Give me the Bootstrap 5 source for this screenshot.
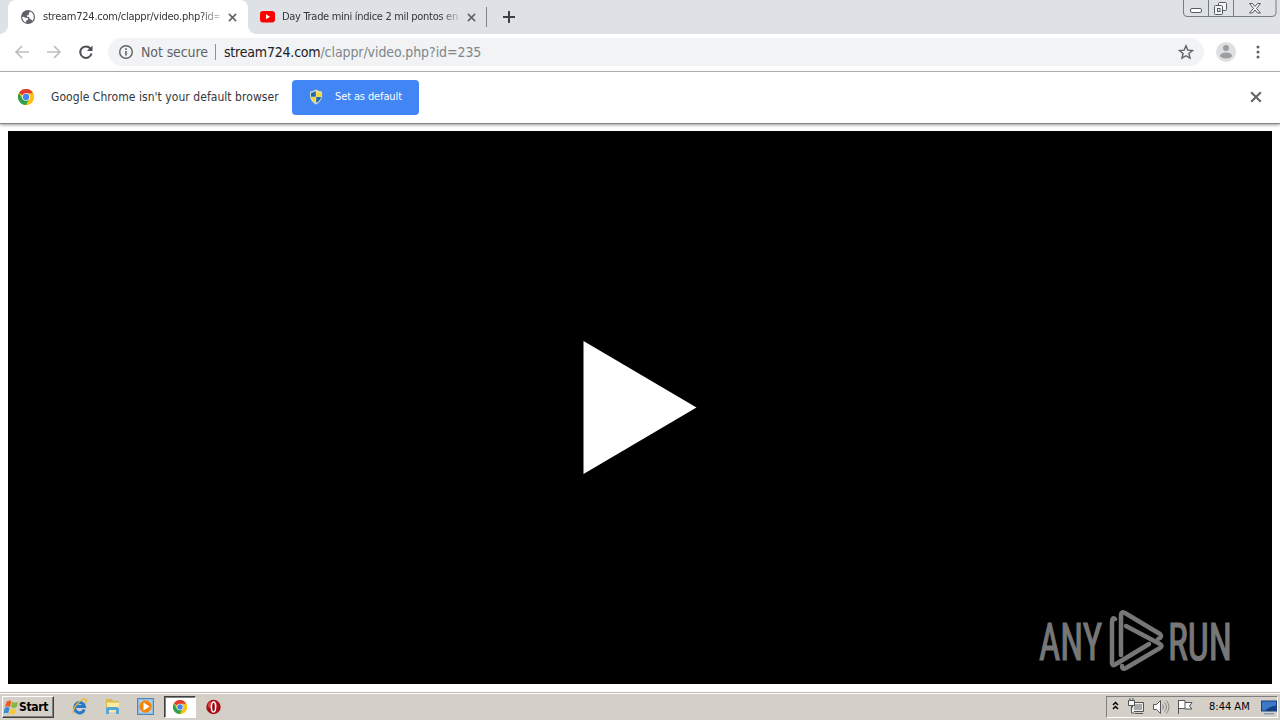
<!DOCTYPE html>
<html lang="en">
  <head>
    <meta charset="UTF-8" />
    <meta name="viewport" content="width=device-width, initial-scale=1.0" />
    <link
      rel="stylesheet"
      href="https://cdn.jsdelivr.net/npm/bootstrap@5.3.3/dist/css/bootstrap.min.css"
    />
    <title>stream724.com/clappr/video.php?id=235</title>
    <style>
      body {
        font-family: "DejaVu Sans Condensed", "DejaVu Sans", sans-serif;
        font-stretch: condensed;
        font-size: 11px;
        line-height: 16px;
        color: #333639;
        height: 720px;
      }
      svg { display: block; flex: none; }
      .tab-strip { height: 34px; background: #dee1e6; padding-left: 8px; }
      .browser-tab { height: 34px; width: 239px; padding-left: 12px; }
      .browser-tab.current { width: 240px; background: #fff; border-radius: 8px 8px 0 0; }
      .browser-tab.current::before,
      .browser-tab.current::after {
        content: "";
        position: absolute;
        bottom: 0;
        width: 8px;
        height: 8px;
      }
      .browser-tab.current::before { left: -8px; background: radial-gradient(circle at 0 0, #dee1e6 7.5px, #fff 8px); }
      .browser-tab.current::after { right: -8px; background: radial-gradient(circle at 100% 0, #dee1e6 7.5px, #fff 8px); }
      .tab-title {
        width: 177px;
        margin-left: 7px;
        -webkit-mask-image: linear-gradient(to right, #000 158px, rgba(0, 0, 0, 0.2) 177px);
      }
      .title-one { letter-spacing: -0.24px; }
      .title-two { letter-spacing: -0.3px; }
      .tab-line { width: 1px; height: 20px; background: #80858b; margin-top: 7px; margin-left: -1px; }
      .window-buttons { right: 3px; top: 0; }
      .toolbar { height: 38px; border-bottom: 1px solid #aeb1ae; padding: 0 14px 1px; }
      .address { height: 28px; width: 1096px; background: #f1f3f4; border-radius: 14px; margin-left: 14px; padding: 0 10px; font-size: 14px; }
      .address .security { color: #5f6368; width: 67px; margin-left: 7px; letter-spacing: -0.1px; }
      .address .split { width: 1px; height: 16px; background: #8d9196; margin: 0 8px 0 7px; }
      .address .site { color: #202124; letter-spacing: -0.2px; }
      .address .path { color: #80868b; letter-spacing: -0.08px; }
      .avatar { margin-left: 12px; }
      .infobar { height: 52px; border-bottom: 1px solid #858585; box-shadow: 0 1px 3px #999; padding: 0 18px 1px; }
      .info-text { font-size: 12px; margin-left: 17px; width: 241px; letter-spacing: 0.05px; }
      .default-btn { width: 127px; height: 35px; background: #4285f4; color: #fff; border-radius: 4px; font-size: 11px; line-height: 16px; padding: 0 16px; }
      .set-label { margin-left: 11px; letter-spacing: -0.12px; }
      .player { height: 553px; margin: 7px 8px 8px; background: #000; }
      .play-icon { position: absolute; left: 575px; top: 210px; }
      .watermark { position: absolute; left: 1028px; top: 475px; font-family: Roboto, sans-serif; }
      .taskbar { height: 28px; background: #d4d0c8; border-top: 1px solid #bdb9b0; box-shadow: inset 0 1px #fff; padding: 3px 2px 0; color: #000; }
      .start-btn { width: 52px; height: 22px; border: 1px solid; border-color: #fff #404040 #404040 #fff; box-shadow: inset -1px -1px #808080; }
      .start-label { font-weight: bold; font-size: 12px; letter-spacing: -0.35px; }
      .launchers { height: 22px; padding-left: 17px; padding-bottom: 1px; }
      .running { width: 32px; height: 22px; background: #fff; border: 1px solid; border-color: #404040 #fff #fff #404040; box-shadow: inset 1px 1px #808080; margin: 1px 10px 0; }
      .tray { width: 172px; height: 22px; border: 1px solid; border-color: #808080 #fff #fff #808080; padding-left: 5px; }
      .clock { width: 42px; margin-left: 15px; letter-spacing: 0; }
    </style>
  </head>

  <body class="d-flex flex-column overflow-hidden bg-white">
    <svg width="0" height="0" class="position-absolute">
      <defs>
        <symbol id="chrome" viewBox="0 0 48 48">
          <circle cx="24" cy="24" r="24" fill="#fbc116" />
          <path d="M24 24L3.200 12A24 24 0 0 1 44.800 12z" fill="#e33b2e" />
          <path d="M3.200 12A24 24 0 0 0 24 48L34.400 30 24 24 13.600 30z" fill="#2ba24c" />
          <path d="M24 13H45.300A24 24 0 0 1 24 48L34 30z" fill="#fbc116" />
          <circle cx="24" cy="24" r="11.500" fill="#fff" />
          <circle cx="24" cy="24" r="9.500" fill="#4285f4" />
        </symbol>
        <symbol id="cross" viewBox="0 0 10 10">
          <path d="M1 1l8 8M9 1L1 9" stroke="#5f6368" stroke-width="1.700" />
        </symbol>
      </defs>
    </svg>

    <header class="tab-strip d-flex position-relative flex-shrink-0">
      <div class="browser-tab current d-flex align-items-center position-relative">
        <svg width="16" height="16" viewBox="0 0 16 16">
          <circle cx="8" cy="8" r="7" fill="#5f6368" />
          <path d="M2.200 7.400l3.500 1.400 2.200.2.200 1.600-2 1.200-.1 1.800C3.800 12.900 2.200 10.500 2.200 7.400zM9.800 2.600c2.500.8 4 3 4 5.400 0 1.500-.6 2.800-1.500 3.900l-.9-1.300-1.700-.7-.6-1.800-2-.3-.3-1.400 1.900-.5.200-1.300z" fill="#fff" />
        </svg>
        <div class="tab-title title-one text-nowrap">stream724.com/clappr/video.php?id=</div>
        <svg class="ms-2" width="9" height="9"><use href="#cross" /></svg>
      </div>
      <div class="browser-tab d-flex align-items-center">
        <svg width="15" height="12" viewBox="0 0 15 12">
          <rect width="15" height="11.500" rx="3" fill="#f00" />
          <path d="M6 3.300v5l4-2.500z" fill="#fff" />
        </svg>
        <div class="tab-title title-two text-nowrap">Day Trade mini índice 2 mil pontos en</div>
        <svg class="ms-2" width="9" height="9"><use href="#cross" /></svg>
      </div>
      <div class="tab-line"></div>
      <svg class="ms-3 mt-2" width="12" height="18" viewBox="0 0 12 18">
        <path d="M0 9h12M6 3v12" stroke="#3c4043" stroke-width="2" />
      </svg>
      <svg class="window-buttons position-absolute" width="94" height="18" viewBox="0 0 94 18" fill="none" stroke="#777d87">
        <path d="M.5 0v13q0 3.500 3.500 3.500h85q4 0 4-3.500V0M25.500 0v16M50.500 0v16" />
        <rect x="7.500" y="8.500" width="11" height="4" rx="1.500" fill="#fff" stroke="#555b65" />
        <g stroke="#555b65" fill="#f5f6f7">
          <rect x="35.500" y="2.500" width="8" height="8" rx="1" />
          <rect x="31.500" y="5.500" width="8" height="9" rx="1" />
          <rect x="34.500" y="8.500" width="2.500" height="3" />
          <path d="M66.500 3.500h3l2.500 3 2.500-3h3l-4 5 4 4.500h-3L72 10l-2.500 3h-3l4-4.500z" />
        </g>
      </svg>
    </header>

    <nav class="toolbar d-flex align-items-center flex-shrink-0">
      <svg width="80" height="16" viewBox="0 0 80 16" fill="none">
        <path d="M15 8H2M8 2L2 8l6 6M33 8h13M40 2l6 6-6 6" stroke="#bcbec1" stroke-width="1.700" />
        <path d="M76.300 4.500A5.700 5.700 0 1 0 77.500 9.500" stroke="#4d5156" stroke-width="2" />
        <path d="M78.500 1.500V7H73z" fill="#4d5156" />
      </svg>
      <div class="address d-flex align-items-center">
        <svg width="16" height="16" viewBox="0 0 16 16" fill="none" stroke="#5f6368">
          <circle cx="8" cy="8" r="6.300" stroke-width="1.400" />
          <path d="M8 7v4.500M8 4.300V6" stroke-width="1.600" />
        </svg>
        <span class="security text-nowrap">Not secure</span>
        <span class="split"></span>
        <span class="site">stream724.com</span><span class="path">/clappr/video.php?id=235</span>
        <svg class="ms-auto" width="16" height="16" viewBox="0 0 16 16">
          <path d="M8 1.800l1.800 4.300 4.700.4-3.600 3 1.100 4.600L8 11.700l-4 2.400 1.100-4.600-3.600-3 4.700-.4z" fill="none" stroke="#5f6368" stroke-width="1.400" />
        </svg>
      </div>
      <svg class="avatar" width="20" height="20" viewBox="0 0 20 20">
        <circle cx="10" cy="10" r="10" fill="#dddfe1" />
        <circle cx="10" cy="6" r="3" fill="#9b9ea1" />
        <ellipse cx="10" cy="13.500" rx="6" ry="3" fill="#9b9ea1" />
      </svg>
      <svg class="ms-auto" width="16" height="16" viewBox="0 0 16 16" fill="#5f6368">
        <circle cx="8" cy="3" r="1.500" /><circle cx="8" cy="8" r="1.500" /><circle cx="8" cy="13" r="1.500" />
      </svg>
    </nav>

    <div class="infobar d-flex align-items-center flex-shrink-0">
      <svg width="16" height="16"><use href="#chrome" /></svg>
      <span class="info-text text-nowrap">Google Chrome isn't your default browser</span>
      <button class="default-btn btn border-0 d-flex align-items-center text-nowrap">
        <svg width="16" height="16" viewBox="0 0 16 16">
          <path d="M8 .5Q5 2.500 2 2.500v5Q2.500 12.500 8 15.500q5.500-3 6-8v-5Q11 2.500 8 .5z" fill="#e8eef2" stroke="#8b989c" stroke-width=".6" />
          <path d="M7.800 2Q5.500 3.500 3 3.700v4h4.800z" fill="#2068a8" /><path d="M8.200 2q2.300 1.500 4.800 1.700v4H8.200z" fill="#f6d53d" />
          <path d="M3 8h4.800v6Q3.500 11.500 3 8z" fill="#f6d53d" /><path d="M13 8H8.200v6q4.300-2.500 4.800-6z" fill="#2068a8" />
        </svg>
        <span class="set-label">Set as default</span>
      </button>
      <svg class="ms-auto" width="12" height="12"><use href="#cross" /></svg>
    </div>

    <main class="player position-relative flex-shrink-0">
      <svg class="play-icon" width="114" height="134" viewBox="0 0 114 134"><path d="M.5 0v133L113.500 66.500z" fill="#fff" /></svg>
      <svg class="watermark" width="210" height="80" viewBox="0 0 210 80" fill="#777" font-size="51">
        <g stroke="#777" stroke-width="1.200">
          <text x="3" y="53.500" textLength="63" lengthAdjust="spacingAndGlyphs">ANY</text>
          <text x="132" y="53.500" textLength="64" lengthAdjust="spacingAndGlyphs">RUN</text>
        </g>
        <g fill="none" stroke="#777" stroke-width="4.500" stroke-linecap="round" stroke-linejoin="round">
          <path d="M79 13q-3-2-3 3v40q0 5 4 2l33-20" />
          <path d="M85 49V9q0-4 4-2l35 21q3 3-2 5" />
          <path d="M90 20l34 18q3 2 0 4L90 62q-4 2-4-2" />
        </g>
      </svg>
    </main>

    <footer class="taskbar d-flex flex-shrink-0">
      <div class="start-btn d-flex align-items-center">
        <svg width="16" height="17" viewBox="0 0 17 17">
          <path d="M4 2q3-2 5 0L7.500 8Q5 6.500 2 8z" fill="#ee5c24" /><path d="M10 2.500q3 2 6 0L14.500 8q-3 2-6 0z" fill="#83b83c" />
          <path d="M2 9q3-2 5 0l-1.500 6q-2-2-5 0z" fill="#3989d5" /><path d="M8 9.500q3 2 6 0L12.500 15q-3 2-6 0z" fill="#f8c735" />
        </svg>
        <span class="start-label">Start</span>
      </div>
      <div class="launchers d-flex align-items-center">
        <svg width="17" height="17" viewBox="0 0 17 17" fill="none">
          <path d="M13.300 11.500A5 5.200 0 1 1 13.500 8.500H5" stroke="#2878c8" stroke-width="3" />
          <path d="M3 15.500C-1 13 10-1 15 1.500q1.500 1-1 4" stroke="#edb934" stroke-width="1.400" />
        </svg>
        <svg class="ms-3" width="17" height="17" viewBox="0 0 17 17">
          <path d="M2 1h6l1 2h6v11H2z" fill="#dcb94e" /><path d="M3 4.500h12V14H3z" fill="#fbeaa0" />
          <path d="M2 16v-5q0-2 2-2h9q2 0 2 2v5h-3v-4H5v4z" fill="#55a5d8" />
        </svg>
        <svg class="ms-3" width="17" height="17" viewBox="0 0 17 17">
          <rect x=".5" y=".5" width="16" height="16" fill="#8dbce6" stroke="#5285b4" />
          <rect x="2.500" y="2.500" width="12" height="12" fill="#bdddf4" />
          <circle cx="8.500" cy="8.500" r="6.200" fill="#f28510" /><path d="M6.500 4.500v8l6-4z" fill="#fff" />
        </svg>
        <div class="running d-flex align-items-center justify-content-center"><svg width="14" height="14"><use href="#chrome" /></svg></div>
        <svg width="15" height="16" viewBox="0 0 16 16">
          <circle cx="8" cy="8" r="7.700" fill="#a70f17" /><ellipse cx="7" cy="6" rx="5" ry="4" fill="#d74449" />
          <ellipse cx="8" cy="8" rx="2.200" ry="5.300" fill="#8f0810" stroke="#fff" stroke-width="1.600" />
        </svg>
      </div>
      <div class="tray d-flex align-items-center ms-auto">
        <svg width="82" height="18" viewBox="0 0 82 18" fill="none">
          <path d="M1 7l2.500-2.500L6 7M1 11l2.500-2.500L6 11" stroke="#000" stroke-width="1.500" />
          <g stroke="#555">
            <path d="M20.500 4.500h11v9h-11z" fill="#eee" /><path d="M22 6h8v6h-8z" fill="#aaa" stroke="none" />
            <path d="M16.500 2.500h6v5h-6zM18 0v3M21 0v3M19.500 7v8h3M23 15.500h8" fill="#f6f6f6" />
            <path d="M41.500 6.500h3l4-4v13l-4-4h-3z" fill="#fff" />
            <path d="M50.500 6.500q2 2.500 0 5M52.500 4.500q4 4.500 0 9M54.500 2.500q5 6.500 0 13" stroke="#888" />
            <path d="M66.500 16V2M67 2.500h6v8h-6M73 4.500h7l-2.500 3.500 2.500 3h-7" fill="#fff" />
          </g>
        </svg>
        <span class="clock text-nowrap">8:44 AM</span>
        <svg class="ms-auto" width="16" height="16" viewBox="0 0 16 16">
          <rect y="1.500" width="16" height="11" fill="#173f84" /><path d="M1 2.500h14v4Q8 8 4 11.500H1z" fill="#3c79c6" /><path d="M3 14h10v1.500H3z" fill="#829abc" />
        </svg>
      </div>
    </footer>
    <script src="https://cdn.jsdelivr.net/npm/bootstrap@5.3.3/dist/js/bootstrap.bundle.min.js"></script>
  </body>
</html>
